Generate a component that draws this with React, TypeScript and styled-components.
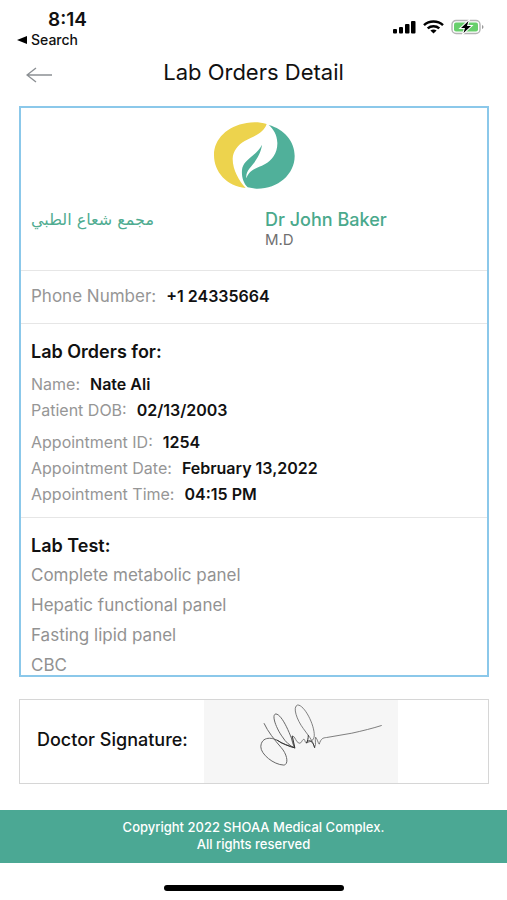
import React from "react";
import styled, { createGlobalStyle } from "styled-components";

const GlobalStyle = createGlobalStyle`
  * { box-sizing: border-box; }
  body {
    margin: 0;
    background: #ffffff;
    color: #111111;
    font-family: Inter, "Liberation Sans", sans-serif;
  }
`;

const Page = styled.div`
  display: flex;
  flex-direction: column;
  min-height: 100vh;
`;

const StatusBar = styled.div`
  display: flex;
  justify-content: space-between;
  align-items: flex-start;
  padding: 9px 23px 0 17px;
`;

const Clock = styled.div`
  padding-left: 31px;
  font-size: 19px;
  line-height: 22px;
  font-weight: 600;
`;

const ReturnLink = styled.a`
  display: flex;
  align-items: center;
  gap: 4px;
  font-size: 14px;
  line-height: 18px;
  font-weight: 500;
  color: #111111;
  text-decoration: none;
`;

const StatusIcons = styled.div`
  display: flex;
  align-items: center;
  gap: 7px;
  padding-top: 10px;
`;

const Header = styled.header`
  display: grid;
  grid-template-columns: 64px 1fr 64px;
  align-items: center;
  height: 46px;
`;

const BackButton = styled.button`
  display: flex;
  padding: 6px 0 0 26px;
  border: 0;
  background: none;
`;

const Title = styled.h1`
  margin: 0;
  text-align: center;
  font-size: 22px;
  line-height: 28px;
  font-weight: 400;
`;

const Card = styled.main`
  margin: 11px 18px 0 19px;
  border: 2px solid #8bc8ea;
`;

const Section = styled.section<{ $top: number; $bottom: number }>`
  padding: ${(p) => p.$top}px 10px ${(p) => p.$bottom}px;
  & + & { border-top: 1px solid #e6e6e6; }
`;

const LogoRow = styled.div`
  display: flex;
  justify-content: center;
`;

const Parties = styled.div`
  display: grid;
  grid-template-columns: 1fr 1fr;
  padding-top: 20px;
  column-gap: 22px;
`;

const ClinicName = styled.div`
  font-family: "DejaVu Sans", sans-serif;
  font-size: 16px;
  line-height: 22px;
  color: #4fac91;
`;

const DoctorName = styled.div`
  font-size: 18px;
  line-height: 22px;
  font-weight: 500;
  color: #4aa98c;
`;

const Degree = styled.div`
  font-size: 15px;
  line-height: 18px;
  color: #707070;
`;

const Fields = styled.dl`
  margin: 0;
  & + & { margin-top: 6px; }
`;

const Field = styled.div<{ $large?: boolean }>`
  display: flex;
  align-items: baseline;
  gap: 10px;
  font-size: ${(p) => (p.$large ? 17 : 16)}px;
  line-height: 26px;
`;

const Label = styled.dt`
  color: #969696;
`;

const Value = styled.dd`
  margin: 0;
  font-size: 16px;
  font-weight: 600;
`;

const Heading = styled.h2`
  margin: 0 0 7px;
  font-size: 18px;
  line-height: 24px;
  font-weight: 600;
`;

const TestList = styled.ul`
  display: flex;
  flex-direction: column;
  gap: 10px;
  margin: 0;
  padding: 0;
  list-style: none;
`;

const Test = styled.li`
  font-size: 17px;
  line-height: 20px;
  color: #929292;
`;

const SignatureBox = styled.section`
  display: flex;
  align-items: center;
  margin: 22px 18px 0 19px;
  border: 1px solid #d6d6d6;
`;

const SignatureLabel = styled.h2`
  margin: 0;
  flex: 0 0 184px;
  padding: 0 0 4px 17px;
  font-size: 18px;
  line-height: 24px;
  font-weight: 500;
  white-space: nowrap;
`;

const SignaturePanel = styled.div`
  display: flex;
  background: #f6f6f6;
`;

const Footer = styled.footer`
  margin-top: 26px;
  padding: 9px 0 10px;
  background: #4ba894;
  color: #ffffff;
  text-align: center;
  font-size: 13px;
  line-height: 17px;
  font-weight: 500;
`;

const HomeIndicator = styled.div`
  align-self: center;
  width: 180px;
  height: 6px;
  margin: 22px 0 8px;
  border-radius: 3px;
  background: #000000;
`;

const patient = [
  ["Name:", "Nate Ali"],
  ["Patient DOB:", "02/13/2003"],
];
const appointment = [
  ["Appointment ID:", "1254"],
  ["Appointment Date:", "February 13,2022"],
  ["Appointment Time:", "04:15 PM"],
];
const tests = ["Complete metabolic panel", "Hepatic functional panel", "Fasting lipid panel", "CBC"];

const FieldList = ({ rows, large }: { rows: string[][]; large?: boolean }) => (
  <Fields>
    {rows.map(([label, value]) => (
      <Field key={label} $large={large}>
        <Label>{label}</Label>
        <Value>{value}</Value>
      </Field>
    ))}
  </Fields>
);

const SignalIcon = () => (
  <svg width="23" height="14" viewBox="0 0 23 14" aria-hidden="true">
    <rect x="0" y="9" width="4" height="4.5" rx="1" />
    <rect x="6" y="7" width="4" height="6.5" rx="1" />
    <rect x="12" y="4" width="4.5" height="9.5" rx="1" />
    <rect x="18" y="1" width="4.5" height="12.5" rx="1" />
  </svg>
);

const WifiIcon = () => (
  <svg width="21" height="14" viewBox="0 0 21 14" fill="none" stroke="#000" strokeWidth="2.5" aria-hidden="true">
    <path d="M1 5.2C6.2 .4 14.8 .4 20 5.2" />
    <path d="M4.7 8.4C8 5.5 13 5.5 16.3 8.4" />
    <path d="M7.4 10.6C9.2 9.2 11.8 9.2 13.6 10.6L10.5 13.4Z" fill="#000" stroke="none" />
  </svg>
);

const BatteryIcon = () => (
  <svg width="33" height="16" viewBox="0 0 33 16" aria-hidden="true">
    <rect x="1" y="1.5" width="28" height="13" rx="4" fill="#fff" stroke="#b4b4b4" strokeWidth="1.4" />
    <rect x="3" y="3.5" width="24" height="9" rx="2" fill="#68cf6c" />
    <path d="M31 6V10Q32.5 9.5 32.5 8T31 6Z" fill="#999" />
    <path d="M17.5 2L10 9H14L12.5 14L20 7H16Z" stroke="#fff" strokeWidth="2" paintOrder="stroke" />
  </svg>
);

const Logo = () => (
  <svg width="81" height="67" viewBox="12 11 243 201" role="img" aria-label="Leaf logo">
    <path fill="#edd34d" d="M170 17C151 11 128 11 110 14C52 23 12 62 12 110C12 161 50 203 107 209C88 188 68 155 68 121C69 98 84 80 104 68C134 52 161 44 170 17Z" />
    <path fill="#50b09a" d="M176 20C222 32 254 69 254 113C254 169 202 213 138 211L113 207C98 192 93 168 97 148C106 119 139 113 156 79C152 110 132 134 119 150C110 161 108 171 109 180C120 151 143 150 164 138C187 126 203 103 202 73C201 49 190 32 176 20Z" />
  </svg>
);

const Signature = () => (
  <svg width="194" height="83" viewBox="12 28 582 250" fill="none" stroke="#666" strokeWidth="3" strokeLinejoin="round" strokeLinecap="round" role="img" aria-label="Signature">
    <g transform="translate(165 30)">
      <path d="M27 69C38 93 58 118 78 141C98 163 101 193 86 194C55 193 17 161 17 139C18 107 53 107 78 127L119 142C109 108 82 41 62 40C47 43 66 88 82 109C91 124 105 137 119 142" />
      <path d="M119 142C112 130 108 112 112 106C122 108 121 124 132 128C141 130 141 114 148 117C151 121 150 128 156 127C168 121 176 122 178 106C179 72 148 13 128 13C111 18 126 59 145 84C157 102 173 117 179 141C185 130 179 120 182 110C187 115 189 127 193 131C198 114 204 112 215 111L291 98C323 91 355 83 380 75" strokeWidth="2.5" />
      <path d="M66 119C82 129 100 138 119 142M112 108L119 140M155 125C163 115 174 122 179 141M160 105C160 113 158 121 155 127" stroke="#333" />
    </g>
  </svg>
);

export default function App() {
  return (
    <Page>
      <GlobalStyle />
      <StatusBar>
        <div>
          <Clock>8:14</Clock>
          <ReturnLink href="#search">
            <svg width="10" height="8" viewBox="0 0 10 8" aria-hidden="true"><path d="M0 4L10 0V8Z" /></svg>
            Search
          </ReturnLink>
        </div>
        <StatusIcons>
          <SignalIcon />
          <WifiIcon />
          <BatteryIcon />
        </StatusIcons>
      </StatusBar>
      <Header>
        <BackButton type="button" aria-label="Back">
          <svg width="27" height="16" viewBox="0 0 27 16" fill="none" stroke="#8c9094" strokeWidth="1.4" aria-hidden="true">
            <path d="M26 8H1M10 1L1 8L10 15" />
          </svg>
        </BackButton>
        <Title>Lab Orders Detail</Title>
      </Header>
      <Card>
        <Section $top={14} $bottom={21}>
          <LogoRow><Logo /></LogoRow>
          <Parties>
            <ClinicName lang="ar">مجمع شعاع الطبي</ClinicName>
            <div>
              <DoctorName>Dr John Baker</DoctorName>
              <Degree>M.D</Degree>
            </div>
          </Parties>
        </Section>
        <Section $top={12} $bottom={14}>
          <FieldList large rows={[["Phone Number:", "+1 24335664"]]} />
        </Section>
        <Section $top={16} $bottom={10}>
          <Heading>Lab Orders for:</Heading>
          <FieldList rows={patient} />
          <FieldList rows={appointment} />
        </Section>
        <Section $top={16} $bottom={0}>
          <Heading>Lab Test:</Heading>
          <TestList>
            {tests.map((test) => <Test key={test}>{test}</Test>)}
          </TestList>
        </Section>
      </Card>
      <SignatureBox>
        <SignatureLabel>Doctor Signature:</SignatureLabel>
        <SignaturePanel><Signature /></SignaturePanel>
      </SignatureBox>
      <Footer>
        Copyright 2022 SHOAA Medical Complex.
        <br />
        All rights reserved
      </Footer>
      <HomeIndicator />
    </Page>
  );
}
